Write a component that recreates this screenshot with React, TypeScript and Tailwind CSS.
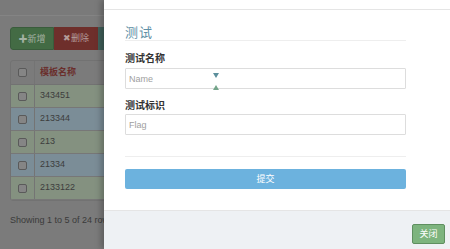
import React from 'react';

const rows = [
  { name: '343451', tone: 'green' },
  { name: '213344', tone: 'blue' },
  { name: '213', tone: 'green' },
  { name: '21334', tone: 'blue' },
  { name: '2133122', tone: 'green' },
];

export default function App() {
  return (
    <div className="relative w-[450px] h-[249px] overflow-hidden bg-[#7b7b7b] font-['Liberation_Sans','Noto_Sans_CJK_SC',sans-serif]">
      {/* Page behind the backdrop */}
      <div className="h-[16px] bg-[#7a7a7a] border-b border-[#848484]" />
      <div className="px-[10px] pt-[11px]">
        <div className="flex h-[23px] w-[200px] rounded-[3px] overflow-hidden text-[9px] leading-[23px]">
          <div className="w-[44px] bg-[#436b44] border border-[#3a5c3c] rounded-l-[3px] text-[#a3b1a3] text-center">✚新增</div>
          <div className="w-[44px] bg-[#6e2f2b] text-[#b49c9a] text-center">✖删除</div>
          <div className="flex-1 bg-[#41605a]" />
        </div>

        <div className="mt-[10px] w-[200px] rounded-[3px] border border-[#727272] overflow-hidden text-[9px]">
          <div className="flex h-[24px] items-center border-b border-[#727272]">
            <Cell check />
            <div className="pl-[5px] font-bold text-[9px] text-[#6a2e2c]">模板名称</div>
          </div>
          {rows.map((r) => (
            <div
              key={r.name}
              className={`flex h-[23px] items-center border-b border-[#777777] ${r.tone === 'green' ? 'bg-[#849180]' : 'bg-[#7b8d97]'}`}
            >
              <Cell check />
              <div className="pl-[5px] text-[#3d3d3d]">{r.name}</div>
            </div>
          ))}
        </div>

        <p className="mt-[12px] text-[9px] leading-[14px] text-[#3a3a3a] whitespace-nowrap">Showing 1 to 5 of 24 rows</p>
      </div>

      {/* Modal panel */}
      <div className="absolute left-[104px] top-0 w-[346px] h-full flex flex-col bg-white shadow-[-3px_0_6px_rgba(0,0,0,0.25)]">
        <div className="h-[10px] border-b border-[#e5e5e5] shrink-0" />

        <div className="flex-1 pl-[21px] pr-[44px] font-['Noto_Sans_CJK_SC','Liberation_Sans',sans-serif]">
          <div className="pt-[14px] border-b border-[#eeeeee]">
            <h3 className="text-[13px] leading-[16px] text-[#5f90a6] tracking-[1px]">测试</h3>
          </div>

          <div className="mt-[10px] text-[10px] leading-[14px] font-bold text-[#333]">测试名称</div>
          <div className="relative mt-[3px]">
            <input
              placeholder="Name"
              className="block w-full h-[21px] border border-[#dddddd] rounded-[1px] px-[3px] text-[9px] placeholder:text-[#a0a0a0] font-['Liberation_Sans',sans-serif] outline-none"
            />
            <svg className="absolute left-[88px] top-[5px]" width="6" height="5" viewBox="0 0 6 5">
              <path d="M0 0H6L3 5Z" fill="#5c8f9c" />
            </svg>
            <svg className="absolute left-[88px] top-[17px]" width="6" height="5" viewBox="0 0 6 5">
              <path d="M0 5H6L3 0Z" fill="#74a58a" />
            </svg>
          </div>

          <div className="mt-[9px] text-[10px] leading-[14px] font-bold text-[#333]">测试标识</div>
          <input
            placeholder="Flag"
            className="block mt-[2px] w-full h-[21px] border border-[#dddddd] rounded-[1px] px-[3px] text-[9px] placeholder:text-[#a0a0a0] font-['Liberation_Sans',sans-serif] outline-none"
          />

          <div className="mt-[21px] border-t border-[#eeeeee]" />

          <button className="block mt-[12px] w-full h-[20px] rounded-[2px] bg-[#6cb2de] text-white text-[9px] leading-[20px]">提交</button>
        </div>

        <div className="h-[39px] shrink-0 border-t border-[#e5e5e5] bg-[#eef1f4] flex justify-end items-start pt-[13px] pr-[5px]">
          <button className="w-[33px] h-[20px] rounded-[2px] bg-[#7db47e] border border-[#5f8f60] text-white text-[9px] leading-[18px] font-['Noto_Sans_CJK_SC',sans-serif]">关闭</button>
        </div>
      </div>
    </div>
  );
}

function Cell({ check }: { check?: boolean }) {
  return (
    <div className="w-[24px] h-full flex items-center justify-center border-r border-[#747474]">
      {check && <div className="w-[9px] h-[9px] rounded-[2px] border border-[#5a5a5a] bg-[#858585]" />}
    </div>
  );
}
